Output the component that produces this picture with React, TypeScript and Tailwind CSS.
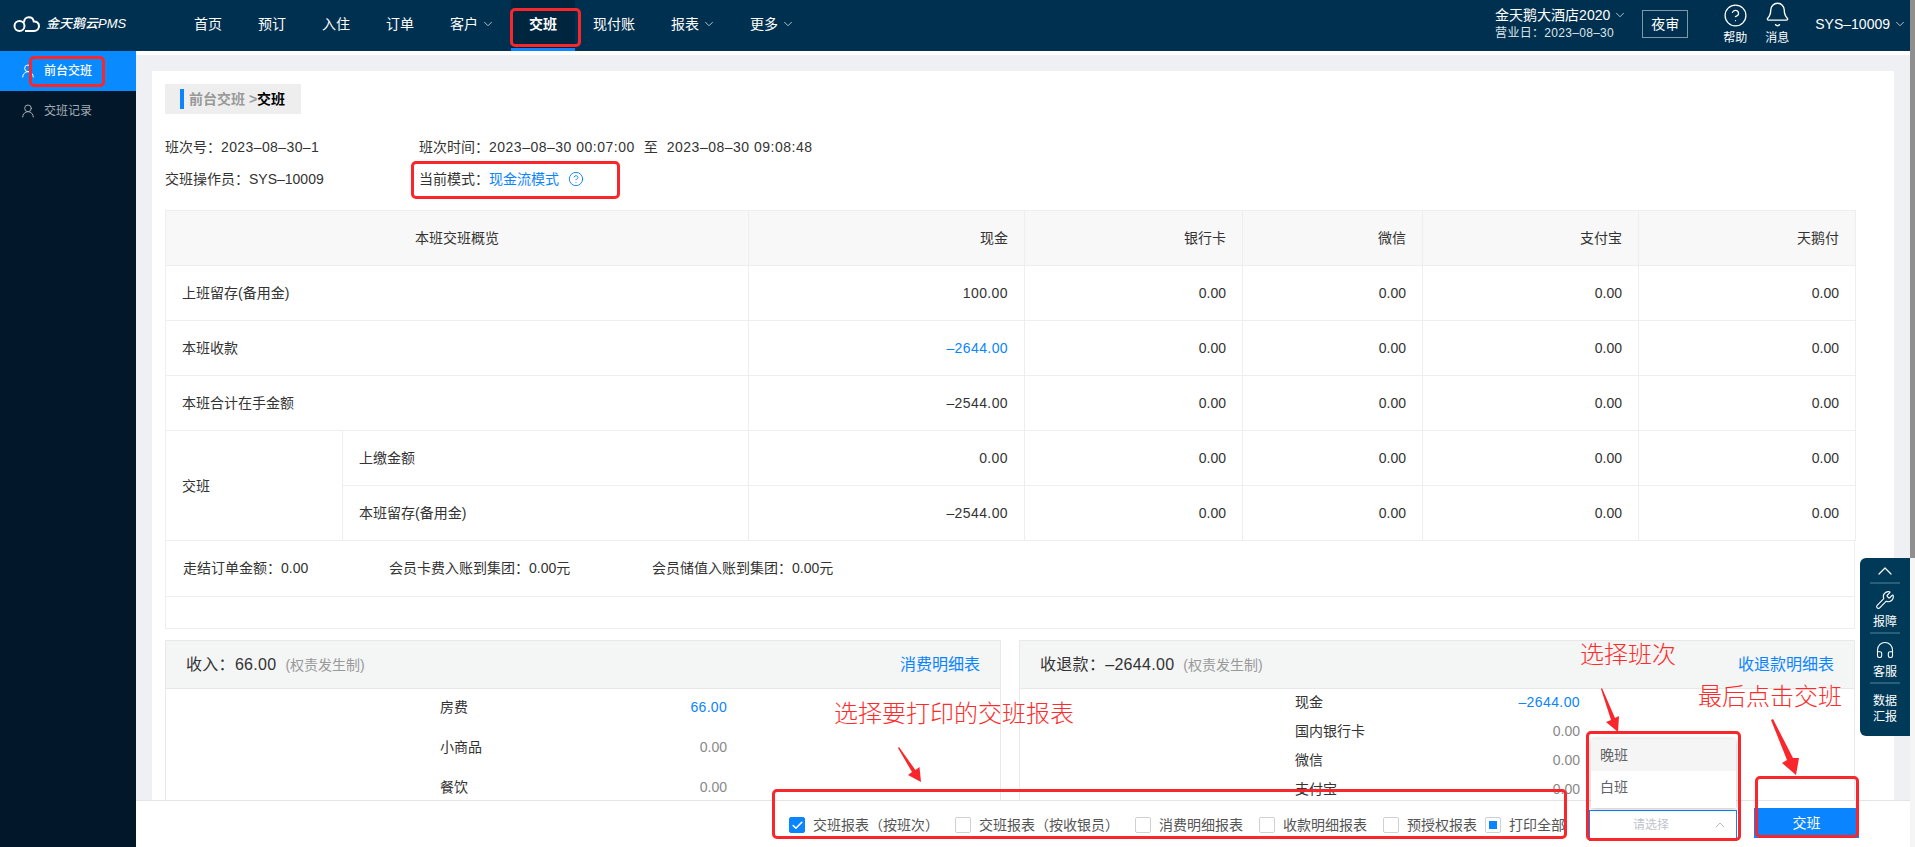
import React from "react";
import { Bell, Check, ChevronDown, ChevronUp, CircleHelp, Headphones, UserRound, Wrench } from "lucide-react";

const rows = [
  { label: "上班留存(备用金)", cash: "100.00" },
  { label: "本班收款", cash: "–2644.00", blue: true },
  { label: "本班合计在手金额", cash: "–2544.00" },
];

const Amounts = ({ cash, blue }: { cash: string; blue?: boolean }) => (
  <>
    <td className={`border border-[#eeeeee] px-4 text-right tracking-[0.4px] ${blue ? "text-[#0a84ff]" : ""}`}>{cash}</td>
    {[0, 1, 2, 3].map((i) => (
      <td key={i} className="border border-[#eeeeee] px-4 text-right">0.00</td>
    ))}
  </>
);

const Arrow = () => <ChevronDown size={14} strokeWidth={1.2} className="-mr-[2px] ml-[3px] text-white" />;

const Nav = ({ label, arrow, active }: { label: string; arrow?: boolean; active?: boolean }) => (
  <a
    className={`flex h-full items-center px-[18px] text-white ${active ? "border-b-[3px] border-[#0a84ff] bg-[#00263f] pb-[1px] font-bold" : "pb-1"}`}
  >
    {label}
    {arrow && <Arrow />}
  </a>
);

const Box = ({ state }: { state?: "on" | "some" }) => (
  <span
    className={`flex h-4 w-4 shrink-0 items-center justify-center rounded-[2px] border ${state === "on" ? "border-[#0a84ff] bg-[#0a84ff]" : "border-[#d0d0d0] bg-white"}`}
  >
    {state === "on" && <Check size={13} strokeWidth={3} className="text-white" />}
    {state === "some" && <span className="h-2 w-2 bg-[#0a84ff]" />}
  </span>
);

const Option = ({ label, state, className }: { label: string; state?: "on" | "some"; className?: string }) => (
  <label className={`flex items-center gap-2 text-[#555] ${className ?? ""}`}>
    <Box state={state} />
    {label}
  </label>
);

const PanelHead = ({ title, link }: { title: string; link: string }) => (
  <div className="flex h-[48px] items-center justify-between border-b border-[#e8e8e8] bg-[#f4f5f5] pl-5 pr-5">
    <div className="flex items-center">
      <span className="text-base tracking-[0.3px] text-[#333]">{title}</span>
      <span className="ml-[9px] text-sm text-[#999]">(权责发生制)</span>
    </div>
    <a className="text-base text-[#0a84ff]">{link}</a>
  </div>
);

const Tool = ({ children, divider }: { children: React.ReactNode; divider?: boolean }) => (
  <div className={`mx-[10px] flex h-[50px] flex-col items-center text-xs leading-4 text-white ${divider ? "border-b-2 border-[#2a5f7a] pt-[6px]" : "justify-center"}`}>
    {children}
  </div>
);

const Red = ({ className }: { className: string }) => (
  <div className={`pointer-events-none absolute rounded-[5px] border-[3px] border-[#f9262b] ${className}`} />
);

export default function App() {
  return (
    <div className="relative flex h-[847px] w-[1915px] overflow-hidden bg-white font-['Liberation_Sans','Noto_Sans_CJK_SC',sans-serif] text-sm text-[#333]">
      <div className="flex w-[1910px] flex-col">
        <header className="flex h-[51px] shrink-0 items-center bg-[#00304f]">
          <div className="mb-[2px] flex w-[176px] items-center pl-[13px] text-white">
            <svg width="28" height="17" viewBox="0 0 28 17" fill="none" stroke="white" strokeWidth="2">
              <circle cx="6.5" cy="10" r="5" />
              <path d="M11 6.5C11 3.5 13 1.2 15.8 1.2c2.6 0 4.6 1.800 5 4.300 2.700-.3 5.200 1.700 5.200 4.500 0 2.800-2.200 5-5 5h-9" />
            </svg>
            <span className="ml-[5px] whitespace-nowrap text-[13px] font-medium italic">金天鹅云PMS</span>
          </div>
          <nav className="flex h-full">
            <Nav label="首页" />
            <Nav label="预订" />
            <Nav label="入住" />
            <Nav label="订单" />
            <Nav label="客户" arrow />
            <Nav label="交班" active />
            <Nav label="现付账" />
            <Nav label="报表" arrow />
            <Nav label="更多" arrow />
          </nav>
          <div className="ml-auto flex items-center pr-[5px] text-white">
            <div className="mb-1">
              <div className="flex items-center leading-5">
                金天鹅大酒店2020
                <Arrow />
              </div>
              <div className="text-xs leading-[17px] tracking-[0.3px] text-[#dfe6ea]">营业日：2023–08–30</div>
            </div>
            <button className="mb-[3px] ml-[17px] h-[28px] w-[46px] border border-[#7f98a8]">夜审</button>
            <div className="mb-[2px] ml-[33px] flex w-[28px] flex-col items-center text-xs">
              <CircleHelp size={25} strokeWidth={1.2} className="mb-[2px]" />
              帮助
            </div>
            <div className="mb-[2px] ml-[14px] flex w-[28px] flex-col items-center text-xs">
              <Bell size={27} strokeWidth={1.2} className="-mt-[2px] mb-[2px]" />
              消息
            </div>
            <span className="mb-[3px] ml-6">SYS–10009</span>
            <span className="mb-[3px]">
              <Arrow />
            </span>
          </div>
        </header>

        <div className="flex min-h-0 flex-1">
          <aside className="w-[136px] shrink-0 bg-[#02172a] text-xs">
            <div className="flex h-10 items-center gap-2 bg-[#0a8aff] pl-5 font-medium text-white">
              <UserRound size={16} strokeWidth={1.5} />
              前台交班
            </div>
            <div className="flex h-10 items-center gap-2 pl-5 text-[#a3adb5]">
              <UserRound size={16} strokeWidth={1.5} />
              交班记录
            </div>
          </aside>

          <main className="relative min-w-0 flex-1 overflow-hidden">
            <div className="h-1 bg-white" />
            <div className="h-full bg-[#eff0f4] pl-4 pr-4 pt-4">
              <div className="h-[800px] bg-white pl-[13px] pr-[39px] pt-[13px]">
                <div className="flex h-[30px] w-[136px] items-center bg-[#eeeeee] pl-[15px] font-bold">
                  <span className="mr-[5px] h-5 w-1 bg-[#0a84ff]" />
                  <span className="text-[#999]">前台交班 &gt;</span>
                  <span className="text-black">交班</span>
                </div>

                <div className="mt-[17px] grid grid-cols-[254px_1fr] leading-8">
                  <div>
                    班次号：<span className="tracking-[0.4px]">2023–08–30–1</span>
                  </div>
                  <div>
                    班次时间：<span className="tracking-[0.5px]">2023–08–30 00:07:00</span>
                    <span className="mx-[9px]">至</span>
                    <span className="tracking-[0.5px]">2023–08–30 09:08:48</span>
                  </div>
                  <div>交班操作员：SYS–10009</div>
                  <div className="flex items-center">
                    当前模式：<span className="text-[#0a84ff]">现金流模式</span>
                    <CircleHelp size={16} strokeWidth={1.4} className="ml-[9px] text-[#0a84ff]" />
                  </div>
                </div>

                <table className="mt-[15px] w-[1690px] table-fixed border-collapse">
                  <colgroup>
                    <col className="w-[177px]" />
                    <col className="w-[406px]" />
                    <col className="w-[276px]" />
                    <col className="w-[218px]" />
                    <col className="w-[180px]" />
                    <col className="w-[216px]" />
                    <col className="w-[217px]" />
                  </colgroup>
                  <tbody>
                    <tr className="h-[55px] bg-[#f8f8f8]">
                      <td colSpan={2} className="border border-[#eeeeee] text-center">本班交班概览</td>
                      {["现金", "银行卡", "微信", "支付宝", "天鹅付"].map((h) => (
                        <td key={h} className="border border-[#eeeeee] px-4 text-right">{h}</td>
                      ))}
                    </tr>
                    {rows.map((r) => (
                      <tr key={r.label} className="h-[55px]">
                        <td colSpan={2} className="border border-[#eeeeee] pl-4">{r.label}</td>
                        <Amounts cash={r.cash} blue={r.blue} />
                      </tr>
                    ))}
                    <tr className="h-[55px]">
                      <td rowSpan={2} className="border border-[#eeeeee] pl-4">交班</td>
                      <td className="border border-[#eeeeee] pl-4">上缴金额</td>
                      <Amounts cash="0.00" />
                    </tr>
                    <tr className="h-[55px]">
                      <td className="border border-[#eeeeee] pl-4">本班留存(备用金)</td>
                      <Amounts cash="–2544.00" />
                    </tr>
                  </tbody>
                </table>

                <div className="border-x border-[#eeeeee]">
                  <div className="flex h-[55px] items-center pb-[2px] pl-[17px]">
                    <span className="w-[206px]">走结订单金额：0.00</span>
                    <span className="w-[263px]">会员卡费入账到集团：0.00元</span>
                    <span>会员储值入账到集团：0.00元</span>
                  </div>
                  <div className="h-[33px] border-y border-[#eeeeee]" />
                </div>

                <div className="mt-[11px] flex gap-[18px]">
                  <section className="h-[300px] w-[836px] border-x border-t border-[#e8e8e8]">
                    <PanelHead title="收入：66.00" link="消费明细表" />
                    <div className="-mt-[2px] ml-[274px] w-[287px]">
                      <div className="flex h-10 items-center justify-between">
                        <span>房费</span>
                        <span className="tracking-[0.3px] text-[#0a84ff]">66.00</span>
                      </div>
                      <div className="flex h-10 items-center justify-between">
                        <span>小商品</span>
                        <span className="text-[#888]">0.00</span>
                      </div>
                      <div className="flex h-10 items-center justify-between">
                        <span>餐饮</span>
                        <span className="text-[#888]">0.00</span>
                      </div>
                    </div>
                  </section>
                  <section className="h-[300px] w-[836px] border-x border-t border-[#e8e8e8]">
                    <PanelHead title="收退款：–2644.00" link="收退款明细表" />
                    <div className="-mt-[2px] ml-[275px] w-[285px]">
                      <div className="flex h-[29px] items-center justify-between">
                        <span>现金</span>
                        <span className="tracking-[0.4px] text-[#0a84ff]">–2644.00</span>
                      </div>
                      <div className="flex h-[29px] items-center justify-between">
                        <span>国内银行卡</span>
                        <span className="text-[#888]">0.00</span>
                      </div>
                      <div className="flex h-[29px] items-center justify-between">
                        <span>微信</span>
                        <span className="text-[#888]">0.00</span>
                      </div>
                      <div className="flex h-[29px] items-center justify-between">
                        <span>支付宝</span>
                        <span className="text-[#888]">0.00</span>
                      </div>
                    </div>
                  </section>
                </div>
              </div>
            </div>

            {/* fixed print bar */}
            <div className="absolute inset-x-0 bottom-0 flex h-[47px] items-center border-t border-[#e4e4e4] bg-white pl-[653px] pt-[2px]">
              <Option label="交班报表（按班次）" state="on" />
              <Option label="交班报表（按收银员）" className="ml-4" />
              <Option label="消费明细报表" className="ml-4" />
              <Option label="收款明细报表" className="ml-4" />
              <Option label="预授权报表" className="ml-4" />
              <Option label="打印全部" state="some" className="ml-2" />
              <div className="relative ml-6 flex h-[31px] w-[148px] items-center border border-[#0a84ff] pl-[43px] pr-2 text-xs text-[#c0c4cc]">
                请选择
                <ChevronUp size={16} strokeWidth={1} className="ml-auto text-[#999]" />
                <div className="absolute bottom-full left-[1px] mb-[3px] h-[69px] w-[145px] bg-white text-sm text-[#606266] shadow-[0_1px_5px_rgba(0,0,0,0.25)]">
                  <div className="flex h-8 items-center bg-[#f5f5f5] pl-[9px]">晚班</div>
                  <div className="flex h-8 items-center pl-[9px]">白班</div>
                </div>
              </div>
              <button className="mb-1 ml-[17px] h-[30px] w-[105px] bg-[#0a84ff] text-white">交班</button>
            </div>
          </main>
        </div>
      </div>

      <div className="w-[5px] bg-[#f5f5f5]">
        <div className="h-[558px] bg-[#8f8f8f]" />
      </div>

      {/* floating tools */}
      <div className="absolute left-[1860px] top-[558px] h-[178px] w-[50px] rounded-l-md bg-[#003a58] py-[2px]">
        <div className="mx-[10px] flex h-[24px] items-center justify-center border-b-2 border-[#2a5f7a] text-white">
          <ChevronUp size={24} strokeWidth={1.2} />
        </div>
        <Tool divider>
          <Wrench size={20} strokeWidth={1.3} />
          <span className="mt-1">报障</span>
        </Tool>
        <Tool divider>
          <Headphones size={20} strokeWidth={1.3} />
          <span className="mt-1">客服</span>
        </Tool>
        <Tool>
          <span>数据</span>
          <span>汇报</span>
        </Tool>
      </div>

      {/* red annotations */}
      <Red className="left-[510px] top-[8px] h-[39px] w-[71px]" />
      <Red className="left-[29px] top-[56px] h-[31px] w-[76px]" />
      <Red className="left-[411px] top-[161px] h-[38px] w-[209px]" />
      <Red className="left-[772px] top-[789px] h-[50px] w-[795px]" />
      <Red className="left-[1586px] top-[731px] h-[110px] w-[155px]" />
      <Red className="left-[1755px] top-[776px] h-[62px] w-[104px]" />
      <div className="pointer-events-none absolute left-[834px] top-[701px] text-2xl leading-[26px] font-light text-[#fd2b2b]">选择要打印的交班报表</div>
      <div className="pointer-events-none absolute left-[1580px] top-[642px] text-2xl leading-[26px] font-light text-[#fd2b2b]">选择班次</div>
      <div className="pointer-events-none absolute left-[1698px] top-[684px] text-2xl leading-[26px] font-light text-[#fd2b2b]">最后点击交班</div>
      <svg className="pointer-events-none absolute left-0 top-0" width="1915" height="847" fill="#f9262b">
        <polygon points="898,748 912,772 908,775 921,782 919.500,767 915.400,770 899,747" />
        <polygon points="1601,689 1611,720 1606,722 1618,732 1619,716 1615,718 1602,688" />
        <polygon points="1771,720 1787,760 1782,763 1796,775 1799,758 1793,758 1773,719" />
      </svg>
    </div>
  );
}
